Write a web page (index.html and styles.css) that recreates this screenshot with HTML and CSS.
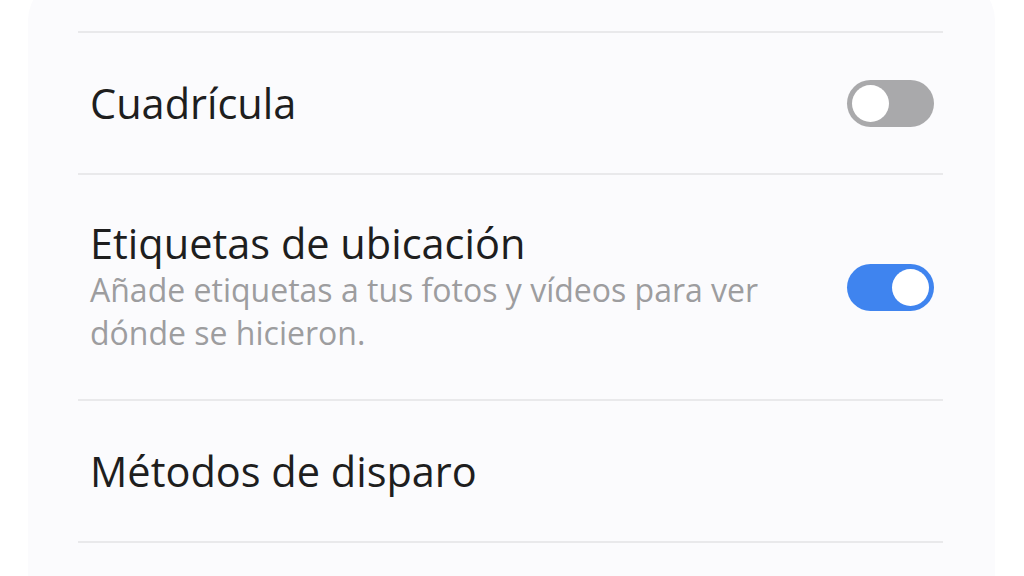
FILE: index.html
```html
<!DOCTYPE html>
<html lang="es">
<head>
  <meta charset="UTF-8">
  <meta name="viewport" content="width=device-width, initial-scale=1.0">
  <title>Ajustes de cámara</title>
  <link rel="stylesheet" href="styles.css">
</head>
<body>
  <div class="card">
    <div class="divider"></div>

    <!-- Cuadrícula -->
    <div class="row">
      <div class="text">
        <div class="title">Cuadrícula</div>
      </div>
      <span class="switch"></span>
    </div>
    <div class="divider"></div>

    <!-- Etiquetas de ubicación -->
    <div class="row row-tall">
      <div class="text">
        <div class="title">Etiquetas de ubicación</div>
        <div class="subtitle">Añade etiquetas a tus fotos y vídeos para ver dónde se hicieron.</div>
      </div>
      <span class="switch on"></span>
    </div>
    <div class="divider"></div>

    <!-- Métodos de disparo -->
    <div class="row">
      <div class="text">
        <div class="title">Métodos de disparo</div>
      </div>
    </div>
    <div class="divider"></div>
  </div>
</body>
</html>
```

FILE: styles.css
```css
body {
  margin: 0;
  padding: 0;
  background-color: #ffffff;
  font-family: 'Open Sans', 'Roboto', sans-serif;
  color: #1e1e1e;
  overflow: hidden;
  height: 576px;
}
.card {
  box-sizing: border-box;
  height: 596px;
  margin: -20px 29px 0 28px;
  padding: 51px 52px 0 50px;
  background-color: #fbfbfd;
  border-radius: 40px 40px 0 0;
}
.divider {
  height: 2px;
  background-color: #e9e9eb;
}
.row {
  display: flex;
  align-items: center;
  justify-content: space-between;
  height: 140px;
  padding: 0 9px 0 12px;
}
.row-tall {
  height: 224px;
}
.text {
  display: flex;
  flex-direction: column;
}
.title {
  font-size: 41.5px;
  line-height: 46px;
}
.subtitle {
  width: 700px;
  margin-top: 2px;
  font-size: 32px;
  line-height: 43px;
  color: #9d9d9f;
}
.switch {
  position: relative;
  width: 87px;
  height: 47px;
  border-radius: 24px;
  background-color: #a9a9ab;
  flex-shrink: 0;
}
.switch::after {
  content: '';
  position: absolute;
  top: 5px;
  left: 5px;
  width: 37px;
  height: 37px;
  border-radius: 50%;
  background-color: #ffffff;
}
.switch.on {
  background-color: #3f84ef;
}
.switch.on::after {
  left: 45px;
}
```
